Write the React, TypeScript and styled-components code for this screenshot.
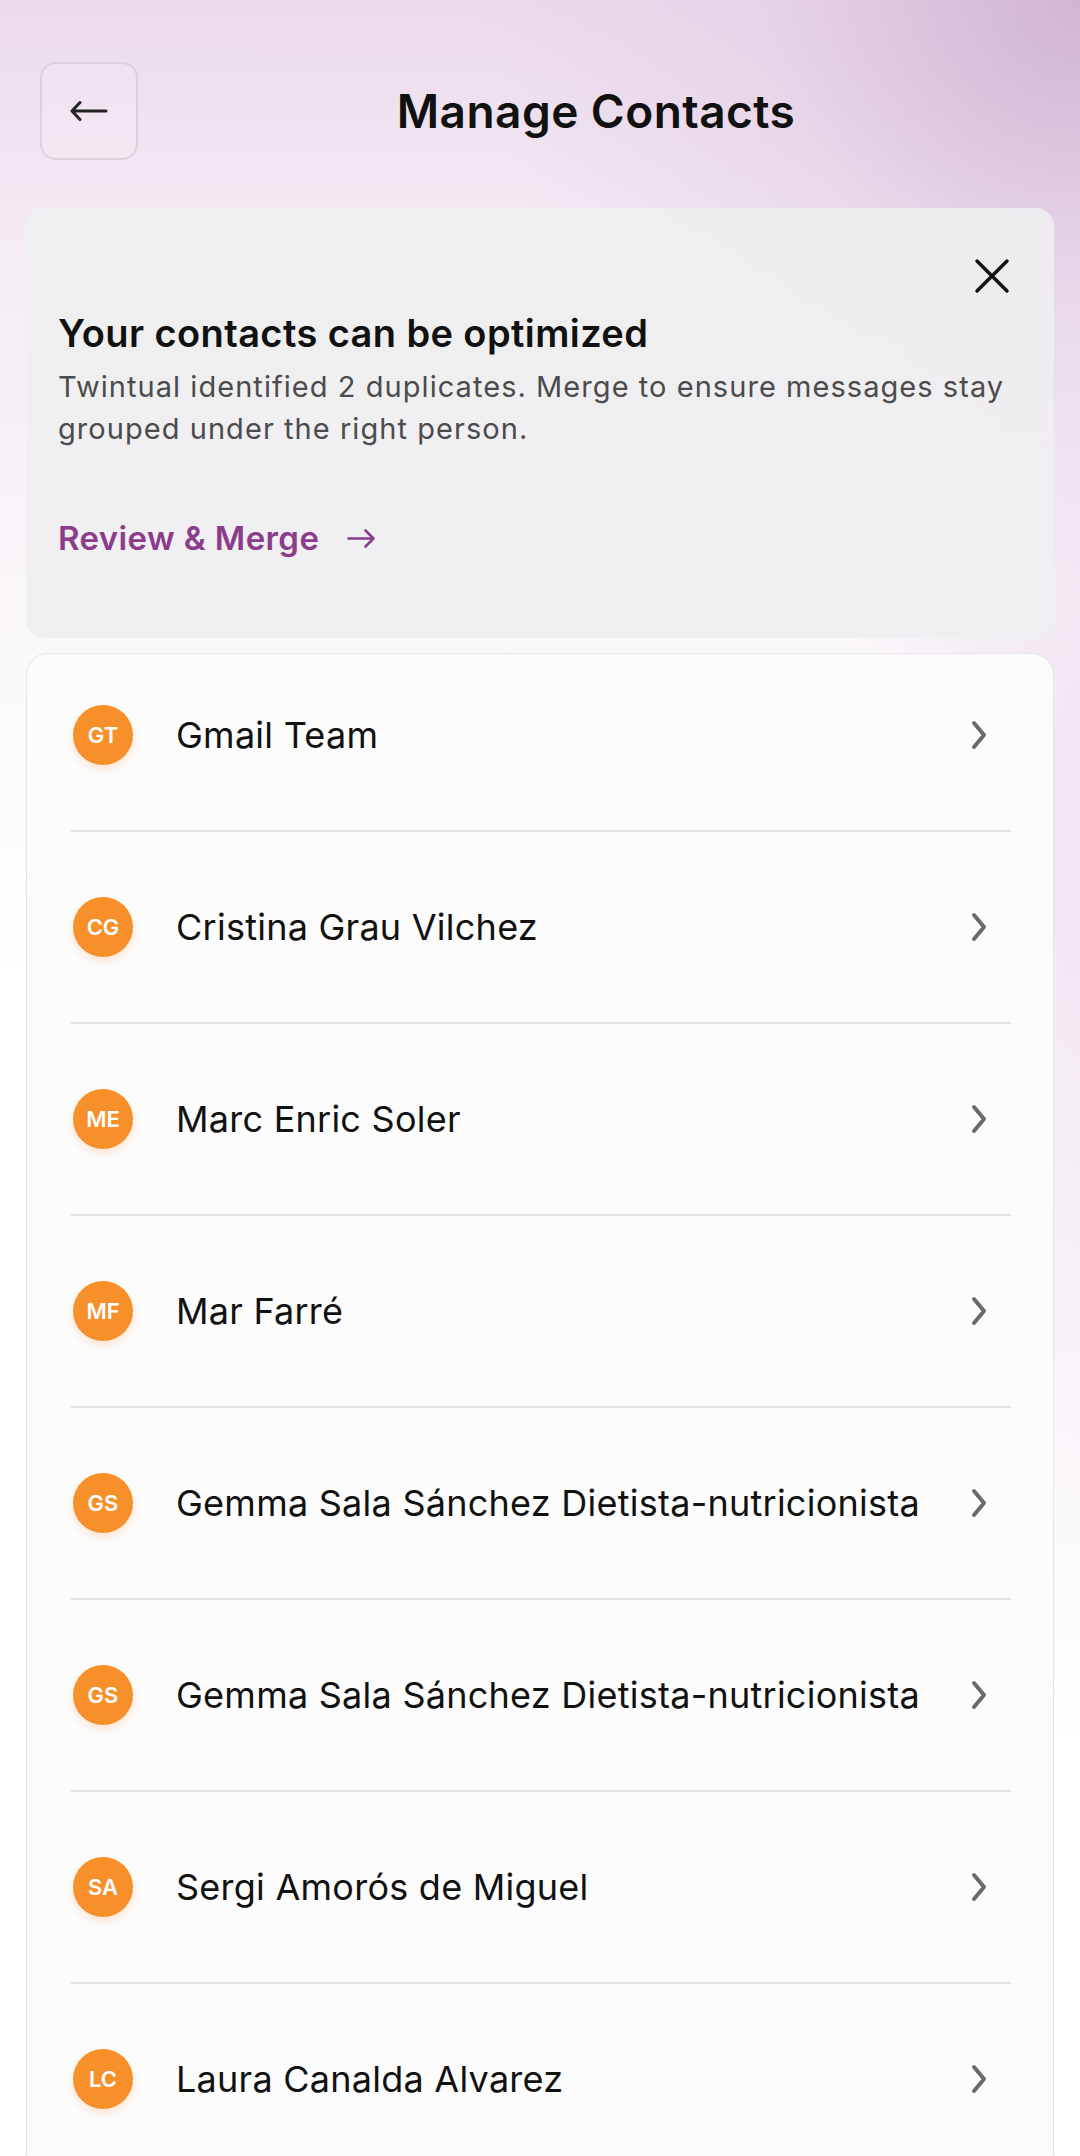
import React from 'react';
import styled, { createGlobalStyle } from 'styled-components';

const GlobalStyle = createGlobalStyle`
  * {
    box-sizing: border-box;
  }
  body {
    margin: 0;
    font-family: Inter, 'Noto Sans', 'Liberation Sans', sans-serif;
    color: #111111;
    background: #ffffff;
  }
`;

type Contact = {
  initials: string;
  name: string;
};

const contacts: Contact[] = [
  { initials: 'GT', name: 'Gmail Team' },
  { initials: 'CG', name: 'Cristina Grau Vilchez' },
  { initials: 'ME', name: 'Marc Enric Soler' },
  { initials: 'MF', name: 'Mar Farré' },
  { initials: 'GS', name: 'Gemma Sala Sánchez Dietista-nutricionista' },
  { initials: 'GS', name: 'Gemma Sala Sánchez Dietista-nutricionista' },
  { initials: 'SA', name: 'Sergi Amorós de Miguel' },
  { initials: 'LC', name: 'Laura Canalda Alvarez' },
];

const Page = styled.div`
  min-height: 2156px;
  padding: 62px 26px 0;
  background:
    radial-gradient(ellipse 65% 32% at 100% 0%, rgba(208, 178, 210, 0.95) 0%, rgba(226, 204, 228, 0.5) 45%, rgba(255, 255, 255, 0) 85%),
    radial-gradient(ellipse 22% 40% at 100% 40%, rgba(236, 222, 238, 0.8) 0%, rgba(255, 255, 255, 0) 100%),
    linear-gradient(180deg, #ebdaeb 0%, #f4ecf4 12%, #fbf8fb 30%, #ffffff 45%);
`;

const Header = styled.header`
  display: flex;
  align-items: center;
  padding-left: 14px;
  margin-bottom: 48px;
`;

const BackButton = styled.button`
  width: 98px;
  height: 98px;
  flex-shrink: 0;
  display: flex;
  align-items: center;
  justify-content: center;
  padding: 0;
  border: 2px solid rgba(200, 180, 200, 0.45);
  border-radius: 16px;
  background: rgba(255, 255, 255, 0.12);
  color: #222222;
`;

const Title = styled.h1`
  flex: 1;
  margin: 0;
  text-align: center;
  font-size: 46px;
  font-weight: 600;
  letter-spacing: 0.45px;
  color: #111111;
`;

const Banner = styled.section`
  height: 430px;
  padding: 50px 44px 0 32px;
  border-radius: 18px;
  background: rgba(238, 238, 240, 0.9);
`;

const BannerTop = styled.div`
  display: flex;
  justify-content: flex-end;
  height: 36px;
  margin-bottom: 16px;
`;

const CloseButton = styled.button`
  width: 36px;
  height: 36px;
  padding: 0;
  border: none;
  background: none;
  color: #111111;
`;

const BannerTitle = styled.h2`
  margin: 0;
  font-size: 38px;
  line-height: 46px;
  font-weight: 600;
  letter-spacing: 0.4px;
  color: #111111;
`;

const BannerText = styled.p`
  margin: 10px -24px 0 0;
  font-size: 29px;
  line-height: 42px;
  letter-spacing: 1.05px;
  color: #4b4b4d;
`;

const ReviewLink = styled.a`
  display: inline-flex;
  align-items: center;
  gap: 28px;
  margin-top: 68px;
  font-size: 33px;
  font-weight: 600;
  letter-spacing: 0.4px;
  color: #8b3c8a;
  text-decoration: none;
`;

const ListCard = styled.div`
  margin-top: 15px;
  padding: 0 42px 0 44px;
  border: 1px solid #e6e6e8;
  border-radius: 22px;
  background: #fcfcfc;
`;

const Row = styled.div`
  display: flex;
  align-items: center;
  padding: 65px 22px 65px 2px;
  border-bottom: 2px solid #e3e3e3;

  &:first-child {
    padding-top: 51px;
  }
`;

const Avatar = styled.div`
  width: 60px;
  height: 60px;
  flex-shrink: 0;
  display: flex;
  align-items: center;
  justify-content: center;
  border-radius: 50%;
  background: #f7902b;
  box-shadow: 0 4px 8px rgba(247, 144, 43, 0.22);
  color: #ffffff;
  font-size: 22px;
  font-weight: 600;
`;

const Name = styled.span`
  flex: 1;
  margin-left: 43px;
  font-size: 36px;
  letter-spacing: 0.25px;
  color: #111111;
  white-space: nowrap;
`;

const BackIcon = () => (
  <svg width="38" height="22" viewBox="0 0 38 22" fill="none" stroke="currentColor" strokeWidth="3" strokeLinecap="round" strokeLinejoin="round">
    <path d="M36 11H2M10 2.5L2 11l8 8.5" />
  </svg>
);

const CloseIcon = () => (
  <svg width="36" height="36" viewBox="0 0 36 36" fill="none" stroke="currentColor" strokeWidth="3.5" strokeLinecap="round">
    <path d="M3 3l30 30M33 3L3 33" />
  </svg>
);

const ArrowIcon = () => (
  <svg width="28" height="19" viewBox="0 0 28 19" fill="none" stroke="currentColor" strokeWidth="2.6" strokeLinecap="round" strokeLinejoin="round">
    <path d="M1.5 9.5h25M18.5 1.5l8 8-8 8" />
  </svg>
);

const ChevronIcon = () => (
  <svg width="20" height="32" viewBox="0 0 20 32" fill="none" stroke="#6b6b6b" strokeWidth="4" strokeLinecap="round" strokeLinejoin="round">
    <path d="M5 4l10 12-10 12" />
  </svg>
);

const ContactRow: React.FC<{ contact: Contact }> = ({ contact }) => (
  <Row>
    <Avatar>{contact.initials}</Avatar>
    <Name>{contact.name}</Name>
    <ChevronIcon />
  </Row>
);

const App: React.FC = () => {
  return (
    <Page>
      <GlobalStyle />
      <Header>
        <BackButton aria-label="Back">
          <BackIcon />
        </BackButton>
        <Title>Manage Contacts</Title>
      </Header>
      <Banner>
        <BannerTop>
          <CloseButton aria-label="Dismiss">
            <CloseIcon />
          </CloseButton>
        </BannerTop>
        <BannerTitle>Your contacts can be optimized</BannerTitle>
        <BannerText>Twintual identified 2 duplicates. Merge to ensure messages stay grouped under the right person.</BannerText>
        <ReviewLink href="#">
          Review &amp; Merge
          <ArrowIcon />
        </ReviewLink>
      </Banner>
      <ListCard>
        {contacts.map((c, i) => (
          <ContactRow key={i} contact={c} />
        ))}
      </ListCard>
    </Page>
  );
};

export default App;
